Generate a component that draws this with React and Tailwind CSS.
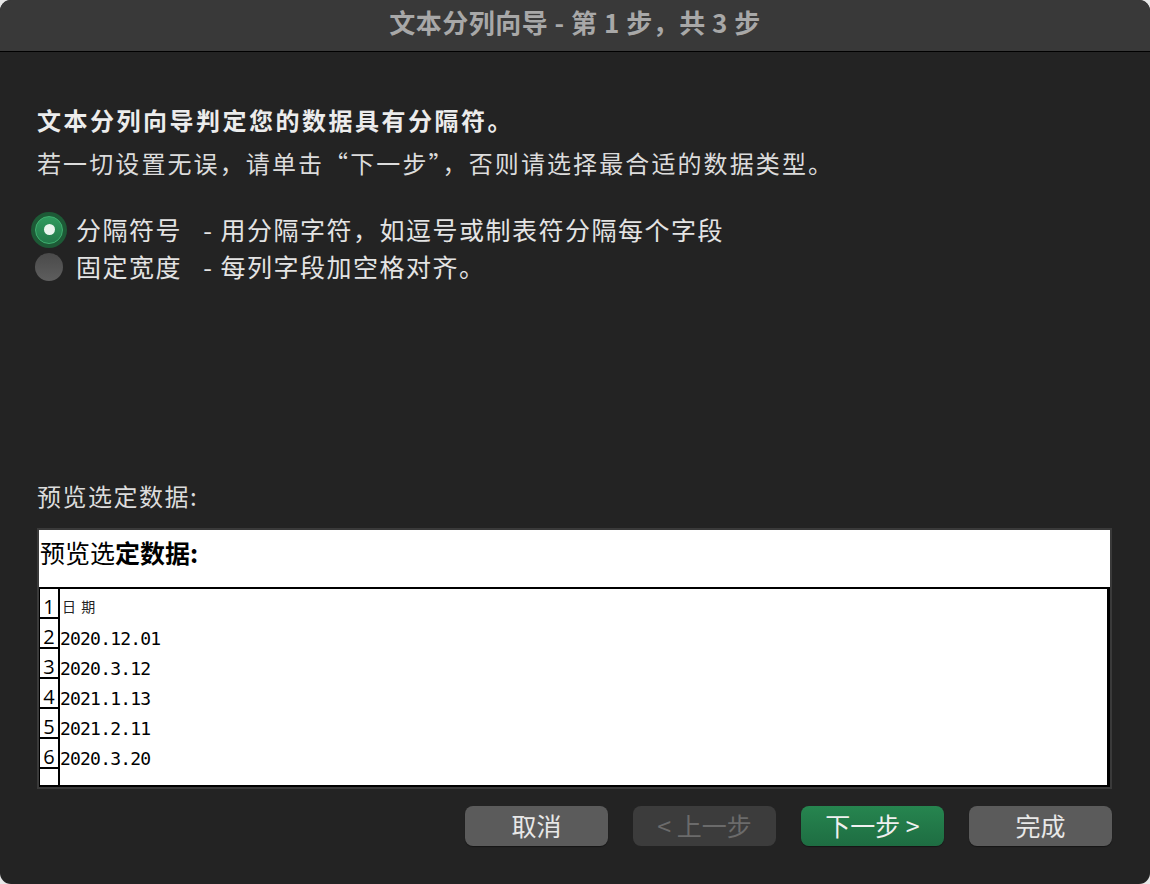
import React from "react";

const cjk = { fontFamily: '"Noto Sans CJK SC", "Noto Sans", sans-serif' };
const mono = { fontFamily: '"DejaVu Sans Mono", "Liberation Mono", monospace' };

const rows = ["日 期", "2020.12.01", "2020.3.12", "2021.1.13", "2021.2.11", "2020.3.20"];

function Radio({ checked }) {
  if (checked) {
    return (
      <div className="w-[36px] h-[36px] rounded-full bg-[#1d5a36] flex items-center justify-center shrink-0">
        <div className="w-[28px] h-[28px] rounded-full bg-gradient-to-b from-[#2f9a5e] to-[#237a4a] border border-[#3fb070] flex items-center justify-center">
          <div className="w-[11px] h-[11px] rounded-full bg-[#e9f5ee]" />
        </div>
      </div>
    );
  }
  return (
    <div className="w-[36px] h-[36px] flex items-center justify-center shrink-0">
      <div className="w-[28px] h-[28px] rounded-full bg-gradient-to-b from-[#4a4a4a] to-[#5e5e5e]" />
    </div>
  );
}

export default function App() {
  return (
    <div className="w-[1150px] h-[884px] bg-[#e8e8e8]" style={cjk}>
      <div className="w-full h-full rounded-[11px] overflow-hidden bg-[#232323] flex flex-col">
        <div className="h-[52px] bg-[#393939] border-b border-black flex items-center justify-center shrink-0">
          <span className="text-[26px] font-bold text-[#a8a8a8] leading-none -mt-[7px] tracking-[0.5px]">
            文本分列向导 - 第 1 步，共 3 步
          </span>
        </div>
        <div className="flex flex-col pl-[37px] pr-[38px] pt-[54px]">
          <div className="text-[24px] font-bold text-[#ececec] leading-[28px] tracking-[2.5px]">
            文本分列向导判定您的数据具有分隔符。
          </div>
          <div className="text-[24px] text-[#dcdcdc] leading-[28px] mt-[15px] tracking-[2.1px]">
            若一切设置无误，请单击“下一步”，否则请选择最合适的数据类型。
          </div>
          <div className="flex flex-col mt-[34px] -ml-[6px]">
            <div className="flex items-center h-[37px]">
              <Radio checked />
              <span className="ml-[9px] text-[25px] text-[#e4e4e4] whitespace-pre tracking-[1.5px]">分隔符号   - 用分隔字符，如逗号或制表符分隔每个字段</span>
            </div>
            <div className="flex items-center h-[37px]">
              <Radio />
              <span className="ml-[9px] text-[25px] text-[#e4e4e4] whitespace-pre tracking-[1.5px]">固定宽度   - 每列字段加空格对齐。</span>
            </div>
          </div>
          <div className="text-[24px] text-[#dcdcdc] leading-[28px] mt-[197px] tracking-[1.5px]">预览选定数据:</div>
          <div className="mt-[18px] border-2 border-[#3a3a3a] bg-white h-[261px] flex flex-col">
            <div className="h-[59px] border-b-2 border-black px-[1px] pt-[7px] text-[25px] text-black leading-[30px]">
              <span>预览选</span><span className="font-bold">定数据:</span>
            </div>
            <div className="flex-1 flex border-l border-r-[3px] border-b-2 border-black overflow-hidden">
              <div className="w-[20px] border-r-[2px] border-black flex flex-col shrink-0">
                {rows.map((_, i) => (
                  <div key={i} className="h-[30px] border-b-2 border-black flex items-end justify-center text-[20px] leading-[20px] text-black shrink-0" style={{ fontFamily: '"Open Sans", "Liberation Sans", sans-serif' }}>
                    {i + 1}
                  </div>
                ))}
              </div>
              <div className="flex flex-col">
                {rows.map((r, i) => (
                  <div key={i} className="h-[30px] flex items-center shrink-0">
                    {i === 0 ? (
                      <span className="text-[14px] text-[#222] ml-[2px] mt-[4px] tracking-[1px]" style={cjk}>{r}</span>
                    ) : (
                      <span className="text-[18px] tracking-[-0.8px] text-black mt-[8px]" style={mono}>{r}</span>
                    )}
                  </div>
                ))}
              </div>
            </div>
          </div>
          <div className="flex justify-end gap-[25px] mt-[17px]">
            <button className="w-[143px] h-[40px] rounded-[8px] bg-[#5b5b5b] text-[#e8e8e8] text-[25px] flex items-center justify-center shadow-[0_1px_1px_rgba(0,0,0,0.4)]">取消</button>
            <button className="w-[143px] h-[40px] rounded-[8px] bg-[#3c3c3c] text-[#6b6b6b] text-[25px] flex items-center justify-center">&lt; 上一步</button>
            <button className="w-[143px] h-[40px] rounded-[8px] bg-gradient-to-b from-[#26854f] to-[#1e6d42] text-[#f0f0f0] text-[25px] flex items-center justify-center shadow-[0_1px_1px_rgba(0,0,0,0.4)]">下一步 &gt;</button>
            <button className="w-[143px] h-[40px] rounded-[8px] bg-[#5b5b5b] text-[#e8e8e8] text-[25px] flex items-center justify-center shadow-[0_1px_1px_rgba(0,0,0,0.4)]">完成</button>
          </div>
        </div>
      </div>
    </div>
  );
}
